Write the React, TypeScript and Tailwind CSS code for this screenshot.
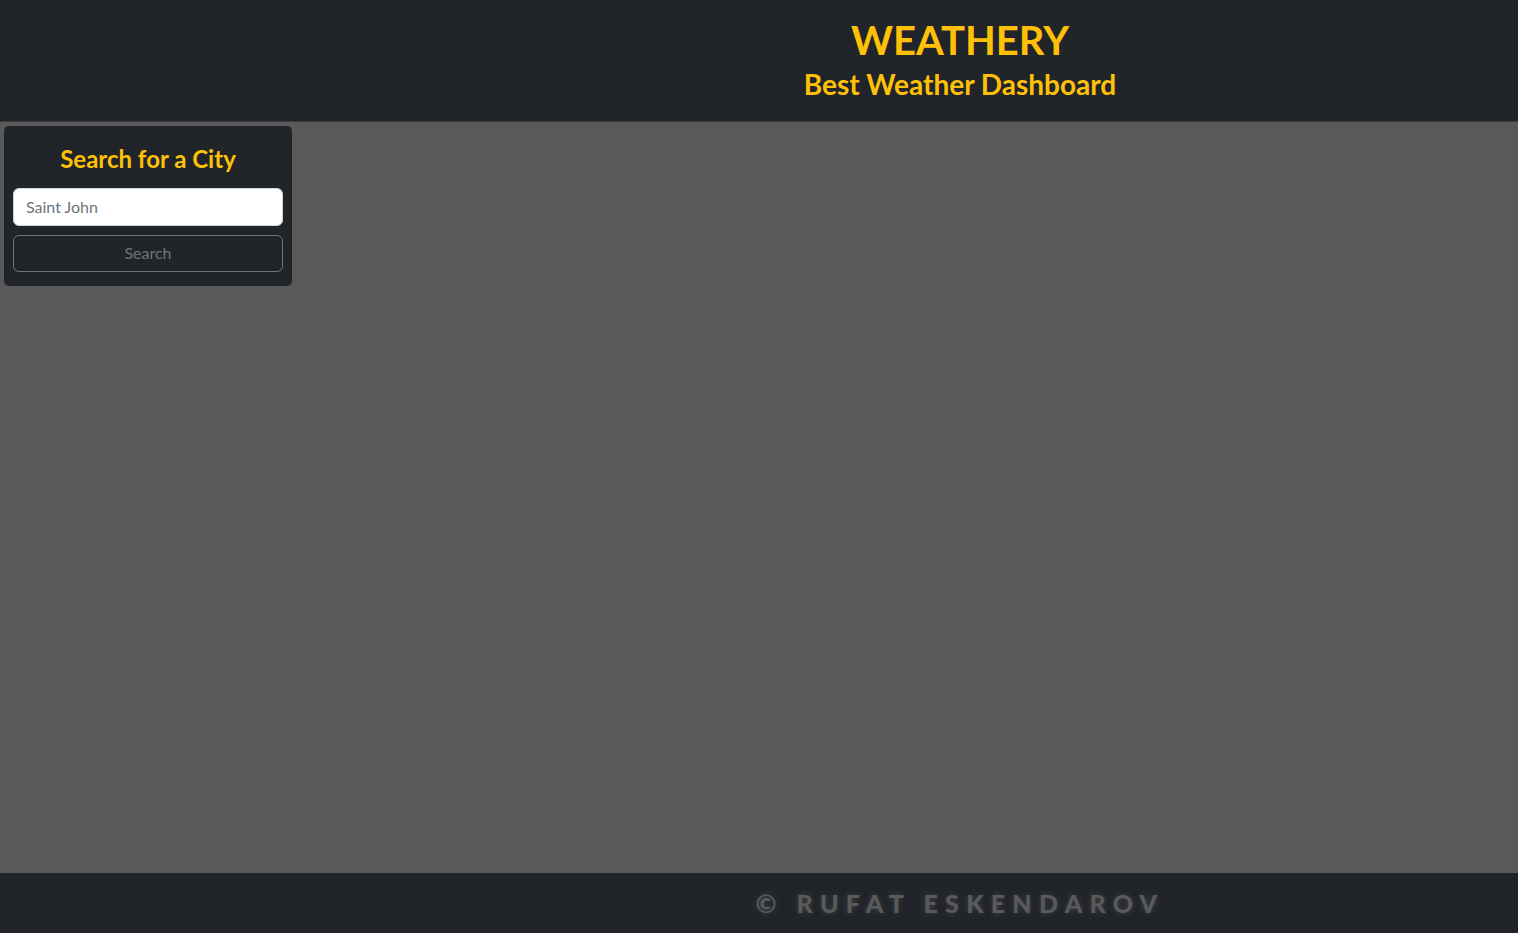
import React from "react";

export default function App() {
  return (
    <div
      className="min-h-screen flex flex-col bg-[#595959]"
      style={{ fontFamily: "Lato, 'Noto Sans', sans-serif" }}
    >
      <header className="bg-[#212529] h-[122px] flex flex-col items-center justify-center pl-[402px] border-b border-[#3a3d41]">
        <h1 className="text-[40px] font-bold leading-[1.2] text-[#ffc107] mt-[-3px]">WEATHERY</h1>
        <h3 className="text-[28px] font-bold leading-[1.2] text-[#ffc107] mt-[4px]">Best Weather Dashboard</h3>
      </header>
      <main className="flex-1 p-[4px]">
        <div className="w-[288px] bg-[#212529] rounded-[5px] px-[9px] pt-[19px] pb-[14px] flex flex-col">
          <h4 className="text-[24px] font-bold leading-[1.2] text-[#ffc107] text-center mb-[14px]">Search for a City</h4>
          <input
            className="h-[38px] w-full rounded-[6px] bg-white border border-[#ced4da] px-[12px] text-[16px] text-[#212529] placeholder:text-[#6c757d] outline-none"
            placeholder="Saint John"
          />
          <button className="mt-[9px] h-[37px] w-full rounded-[6px] border border-[#6c757d] text-[#6c757d] text-[16px] bg-transparent">
            Search
          </button>
        </div>
      </main>
      <footer className="bg-[#212529] h-[60px] flex items-center justify-center pl-[402px]">
        <span
          className="text-[25px] font-black tracking-[0.29em] text-[#5a5a5a] mt-[2px]"
          style={{ textShadow: "0 0 6px rgba(120,120,120,0.35)" }}
        >
          © RUFAT ESKENDAROV
        </span>
      </footer>
    </div>
  );
}
